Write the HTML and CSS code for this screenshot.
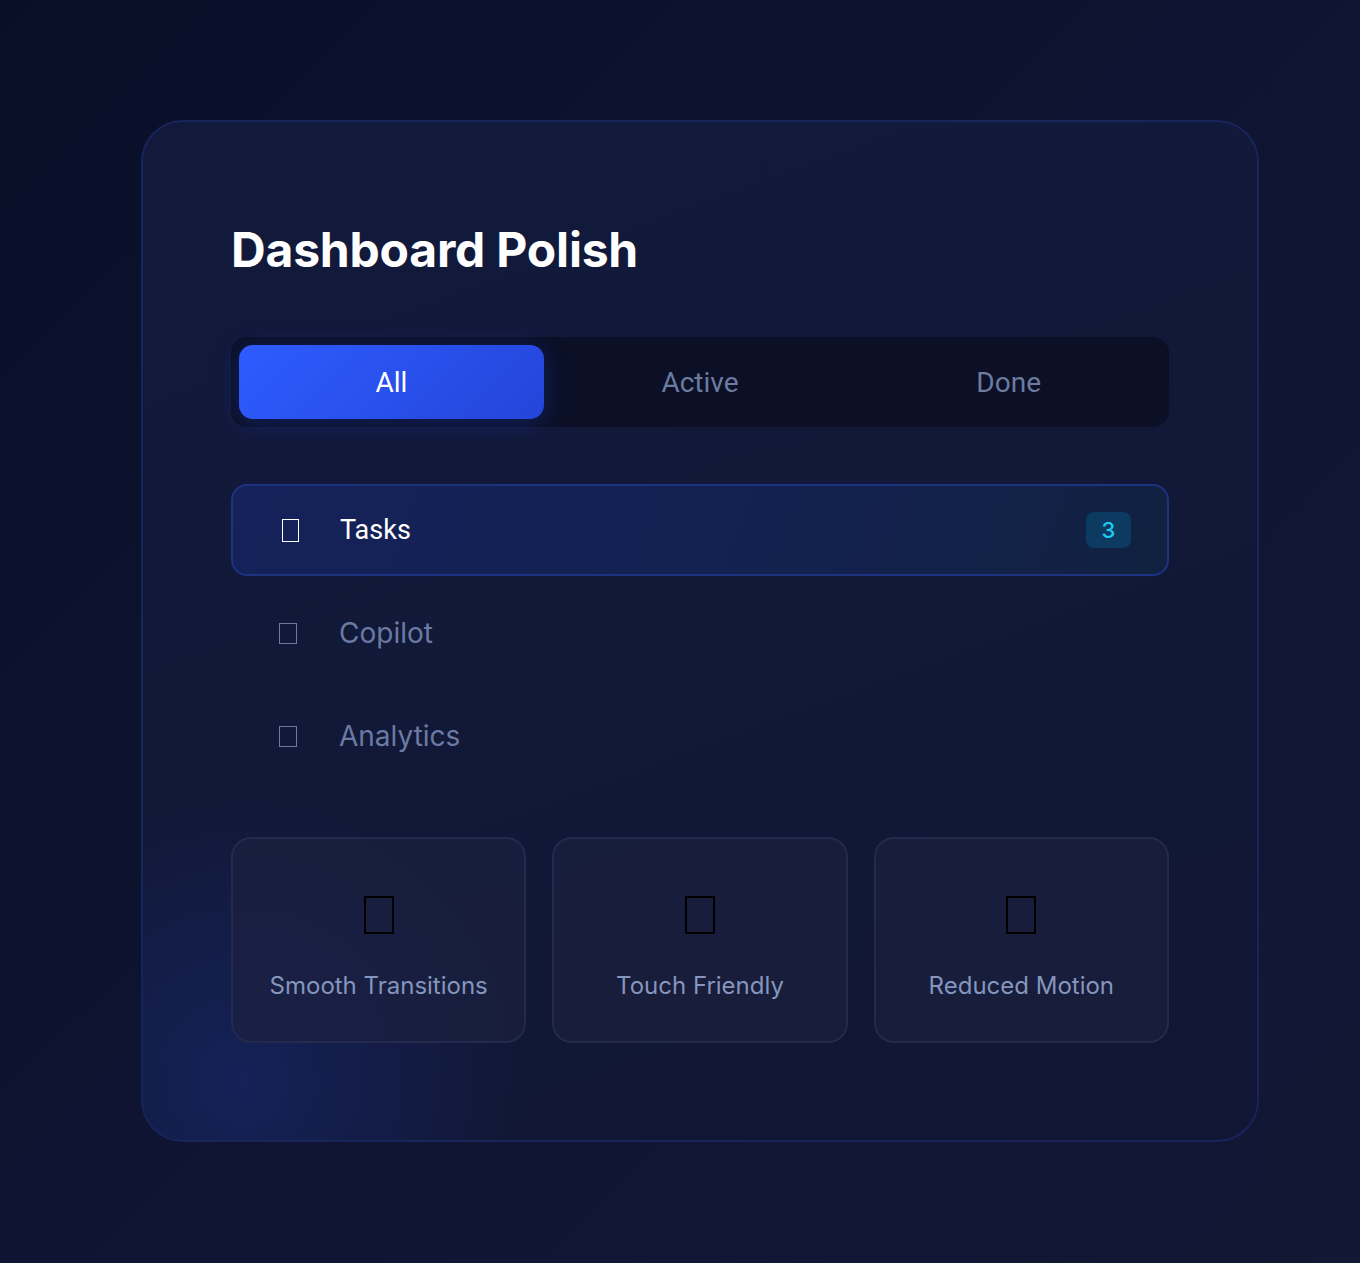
FILE: index.html
```html
<!DOCTYPE html>
<html lang="en">
<head>
    <meta charset="UTF-8">
    <meta name="viewport" content="width=device-width, initial-scale=1.0">
    <title>Dashboard Polish</title>
    <link rel="stylesheet" href="styles.css">
</head>
<body>
    <div class="panel">
        <h1>Dashboard Polish</h1>

        <!-- filter tabs -->
        <div class="tabs">
            <button class="tab active">All</button>
            <button class="tab">Active</button>
            <button class="tab">Done</button>
        </div>

        <!-- nav list -->
        <div class="nav">
            <div class="nav-item selected">
                <span class="glyph"></span>
                <span class="nav-label">Tasks</span>
                <span class="badge">3</span>
            </div>
            <div class="nav-item">
                <span class="glyph"></span>
                <span class="nav-label">Copilot</span>
            </div>
            <div class="nav-item">
                <span class="glyph"></span>
                <span class="nav-label">Analytics</span>
            </div>
        </div>

        <!-- feature cards -->
        <div class="features">
            <div class="feature">
                <span class="feature-glyph"></span>
                <span class="feature-label">Smooth Transitions</span>
            </div>
            <div class="feature">
                <span class="feature-glyph"></span>
                <span class="feature-label">Touch Friendly</span>
            </div>
            <div class="feature">
                <span class="feature-glyph"></span>
                <span class="feature-label">Reduced Motion</span>
            </div>
        </div>
    </div>
</body>
</html>
```

FILE: styles.css
```css
body {
    margin: 0;
    min-height: 1263px;
    font-family: Inter, "Noto Sans", sans-serif;
    background: linear-gradient(135deg, #0a0f28 0%, #0f1533 60%, #121834 100%);
    padding: 120px 0 0 40px;
    box-sizing: border-box;
}
.panel {
    width: 1118px;
    height: 1022px;
    margin: 0 auto;
    box-sizing: border-box;
    padding: 98px 88px 0 88px;
    border: 2px solid #18245a;
    border-radius: 42px;
    background:
        radial-gradient(circle at 100px 960px, rgba(24, 40, 110, 0.6) 0%, rgba(24, 40, 110, 0) 280px),
        linear-gradient(160deg, #121a3c 0%, #111837 60%, #101633 100%);
}
h1 {
    margin: 0 0 57px 0;
    color: #ffffff;
    font-size: 48px;
    font-weight: 700;
    line-height: 60px;
    letter-spacing: -0.2px;
}
.tabs {
    display: grid;
    grid-template-columns: repeat(3, 1fr);
    gap: 4px;
    padding: 8px;
    background: #0b1026;
    border-radius: 16px;
}
.tab {
    height: 74px;
    border: none;
    border-radius: 14px;
    background: transparent;
    color: #6c7b9f;
    font-family: Roboto, sans-serif;
    font-size: 28px;
    cursor: pointer;
}
.tab.active {
    color: #ffffff;
    background: linear-gradient(135deg, #2e5cff 0%, #2445d9 100%);
    box-shadow: 0 4px 24px rgba(40, 80, 255, 0.25);
}
.nav {
    display: flex;
    flex-direction: column;
    gap: 11px;
    margin-top: 57px;
}
.nav-item {
    display: flex;
    align-items: center;
    height: 92px;
    box-sizing: border-box;
    padding: 0 36px 0 48px;
    border-radius: 16px;
    color: #6b7aa3;
    font-size: 28px;
}
.nav-item.selected {
    padding-left: 49px;
    border: 2px solid #1d3280;
    background: linear-gradient(110deg, #15225b 0%, #13214f 60%, #11213f 100%);
    color: #ffffff;
    font-family: Roboto, sans-serif;
    font-size: 27px;
}
.glyph {
    width: 16px;
    height: 19px;
    border: 1.5px solid currentColor;
    margin-right: 42px;
}
.nav-item.selected .glyph {
    width: 15px;
    height: 21px;
    margin-right: 41px;
}
.nav-label {
    flex: 1;
}
.badge {
    width: 45px;
    height: 36px;
    line-height: 36px;
    text-align: center;
    border-radius: 8px;
    background: #0d3a60;
    color: #1ecbf2;
    font-family: Inter, sans-serif;
    font-size: 22px;
    font-weight: 500;
}
.features {
    display: grid;
    grid-template-columns: repeat(3, 1fr);
    gap: 26px;
    margin-top: 55px;
}
.feature {
    height: 206px;
    box-sizing: border-box;
    display: flex;
    flex-direction: column;
    align-items: center;
    padding-top: 57px;
    border: 2px solid #232a4d;
    border-radius: 20px;
    background: rgba(28, 33, 64, 0.6);
}
.feature-glyph {
    width: 26px;
    height: 34px;
    border: 2.5px solid #000000;
}
.feature-label {
    margin-top: 37px;
    color: #8595bd;
    font-size: 24px;
}
```
